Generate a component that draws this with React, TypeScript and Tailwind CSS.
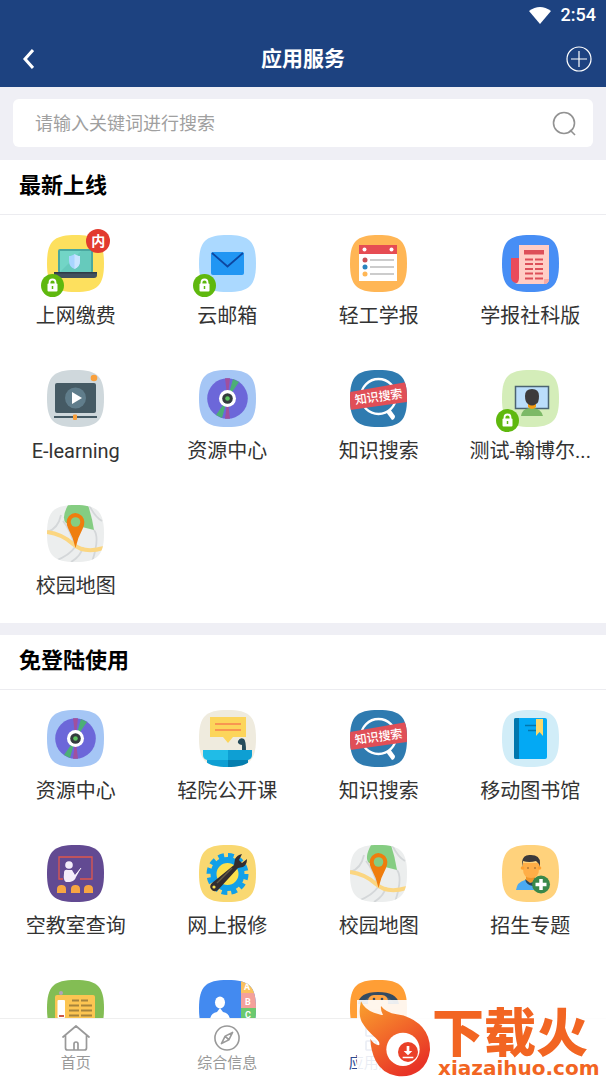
import React, { useId } from 'react';

interface AppItem {
  name: string;
  icon: React.FC;
  locked?: boolean;
  intranet?: boolean;
}

const SQUIRCLE = 'M28.5 0C50.5 0 57 6.5 57 28.5S50.5 57 28.5 57 0 50.5 0 28.5 6.5 0 28.5 0Z';

const Tile: React.FC<{ color: string; children: React.ReactNode }> = ({ color, children }) => {
  const id = useId();
  return (
    <svg viewBox="0 0 57 57" className="block h-[57px] w-[57px]" aria-hidden="true">
      <clipPath id={id}>
        <path d={SQUIRCLE} />
      </clipPath>
      <g clipPath={`url(#${id})`}>
        <rect width="57" height="57" fill={color} />
        {children}
      </g>
    </svg>
  );
};

const LaptopIcon = () => (
  <Tile color="#fde05e">
    <rect x="11" y="14" width="35" height="24" rx="2" fill="#4aa8a0" />
    <rect x="13" y="16" width="31" height="21" fill="#72d5c6" />
    <path d="M13 37 34 16h10v21z" fill="#66cabc" />
    <path d="M27.500 19c2 1.500 3.500 2 5.500 2v5c0 4-2 6.500-5.500 8-3.500-1.500-5.500-4-5.500-8v-5c2 0 3.500-.5 5.500-2z" fill="#a9d5ff" />
    <path d="M27.500 19c2 1.500 3.500 2 5.500 2v5c0 4-2 6.500-5.500 8z" fill="#c9e5ff" />
    <path d="M7 37h43v3q0 3-3 3H10q-3 0-3-3z" fill="#41505e" />
    <path d="M7 37h43v1.500H7z" fill="#2f3b47" />
  </Tile>
);

const MailIcon = () => (
  <Tile color="#abd9ff">
    <rect x="12" y="17" width="33" height="23" rx="2" fill="#2196f3" />
    <path d="m13 18 15.500 13.500L44 18" fill="none" stroke="#0d47a1" strokeWidth="1.800" />
  </Tile>
);

const ScheduleIcon = () => (
  <Tile color="#ffb655">
    <rect x="9" y="10" width="38" height="36" fill="#fff" />
    <rect x="9" y="10" width="38" height="9" fill="#e64c53" />
    <circle cx="14.500" cy="14.500" r="2" fill="#fff" />
    <circle cx="41.500" cy="14.500" r="2" fill="#fff" />
    <circle cx="15" cy="25" r="2.500" fill="#c94f55" />
    <circle cx="15" cy="32" r="2.500" fill="#2a83bd" />
    <circle cx="15" cy="39" r="2.500" fill="#ffb655" />
    <path d="M20 25h24M20 32h24M20 39h24" stroke="#ccc" strokeWidth="2" />
  </Tile>
);

const NewspaperIcon = () => (
  <Tile color="#478ef5">
    <path d="M9 23h9v25h-4q-5-1-5-6z" fill="#e94b5b" />
    <path d="M17 10h30v34q0 5-5 5H13q4-1 4-6z" fill="#ffcdc5" />
    <path d="M42 49q5 0 5-5h-5z" fill="#f7aaa4" />
    <rect x="22" y="15" width="20" height="4.500" fill="#dd4f59" />
    <path d="M23 24.500h8M33 24.500h8M23 29h8M33 29h8M23 34h8M33 34h8M23 38.500h8M33 38.500h8M23 43.500h8M33 43.500h8" stroke="#dd4f59" strokeWidth="2" />
  </Tile>
);

const VideoIcon = () => (
  <Tile color="#cfd8dc">
    <circle cx="47" cy="8" r="3.300" fill="#f9a03c" />
    <rect x="8" y="13" width="41" height="30" rx="2" fill="#455a64" />
    <circle cx="28.500" cy="28" r="10.500" fill="#607d8b" />
    <path d="m25 22 10 6-10 6z" fill="#fff" />
    <rect x="7" y="46" width="43" height="2" fill="#455a64" />
    <rect x="26" y="44.500" width="4" height="5.500" rx="1" fill="#f9a03c" />
  </Tile>
);

const DiscIcon = () => (
  <Tile color="#a5c6f5">
    <circle cx="28.500" cy="28.500" r="20.300" fill="#6c67d9" />
    <path d="M26 8.300h5l-2.500 20zM26 48.700h5l-2.500-20.200z" fill="#a0509e" />
    <path d="m34 9 6 3-11.500 16.500zM23 48l-6-3 11.500-16.500z" fill="#4caf76" />
    <circle cx="28.500" cy="28.500" r="8.500" fill="#fff" />
    <circle cx="28.500" cy="28.500" r="5.300" fill="#333b3d" />
    <circle cx="28.500" cy="28.500" r="2.300" fill="#5bc15f" />
  </Tile>
);

const KnowledgeIcon = () => (
  <Tile color="#2f7bb0">
    <circle cx="28.500" cy="26.500" r="17.500" fill="none" stroke="#fff" strokeWidth="2.300" />
    <path d="m36 42 4-3 5 7q0 3-3 4z" fill="#fff" />
    <path d="M0 22 57 12v20L0 40z" fill="#e04f57" />
    <text
      x="28.500"
      y="31"
      fill="#fff"
      textAnchor="middle"
      transform="rotate(-8 28.500 26)"
      className="font-['Noto_Sans_CJK_SC',sans-serif] text-[12px] font-medium"
    >
      知识搜索
    </text>
  </Tile>
);

const MonitorIcon = () => (
  <Tile color="#d4edb9">
    <rect x="13.500" y="16.500" width="33" height="22" fill="#bbdefb" stroke="#4b6472" strokeWidth="1.500" />
    <path d="M19 46q1-7 8-8h5q7 1 9 8z" fill="#7cb966" />
    <path d="M26 34h8v3q-4 4-8 0z" fill="#f39c12" />
    <path d="M23 26q0-7 7-7t7 7-3 8q-4 3-8 0-3-2-3-8z" fill="#3d3b3c" />
  </Tile>
);

const MapIcon = () => (
  <Tile color="#eceeee">
    <path d="M21 0h20q4 12 6 25L19 18q-5-5 2-18z" fill="#85cd82" />
    <path d="M14 10q-3 14-14 17M16 16q7 8 12 26-5 8-20 14M42 0q6 12 13 16M47 25q6 8-2 32M36 42q-2 9-12 15" fill="none" stroke="#d4d7d9" strokeWidth="1.800" />
    <path d="M0 27q15 2 26 12t31 4" fill="none" stroke="#fbd681" strokeWidth="4" />
    <path d="M28.500 43Q26 32 21 23q-3-7 1-12 6-6 13 0 4 5 1 12-5 9-7.500 20z" fill="#ef7d0e" />
    <circle cx="28.500" cy="17" r="4.800" fill="#85cd82" />
  </Tile>
);

const LectureIcon = () => (
  <Tile color="#efebde">
    <path d="M11 7h36v20H34l-5 6-5-6H11z" fill="#fcd55b" />
    <path d="M16 14h26M16 20h26" stroke="#f6814f" strokeWidth="1.500" />
    <path d="M43 41v-6q-5-1-4-4 2-4 6-2 2 2 2 12z" fill="#264c5b" />
    <path d="M8 48h21v9H8z" fill="#0e9fd3" />
    <path d="M29 48h20v9H29z" fill="#057eaf" />
    <path d="M4 40h25v10H8q-4-1-4-5z" fill="#20bce7" />
    <path d="M29 40h24v5q0 4-4 5H29z" fill="#0e9fd3" />
  </Tile>
);

const BookIcon = () => (
  <Tile color="#d1edf8">
    <rect x="12" y="8" width="33" height="41" rx="2" fill="#03a9f4" />
    <path d="M14 8h3v41h-3q-2 0-2-2V10q0-2 2-2z" fill="#0277ad" />
    <path d="M23 15.500h13M26 20.500h10" stroke="#0277ad" strokeWidth="1.500" />
    <path d="M34 9h7v17l-3.500-4-3.500 4z" fill="#fbd96b" />
  </Tile>
);

const ClassroomIcon = () => (
  <Tile color="#624a92">
    <path d="M16 34h-4V12h33v22H33" fill="none" stroke="#e0574c" strokeWidth="1.300" />
    <circle cx="22" cy="20" r="3.800" fill="#f4edfa" />
    <path d="M17 28q0-4 4-3h4l3 5 6-7-5 9q-1 4-6 5h-4q-3-1-2-9z" fill="#f4edfa" />
    <path d="m28 31 6-8" stroke="#f4edfa" />
    <path d="M10 48v-4q0-4 4.500-4t4.500 4v4zM24 48v-4q0-4 4.500-4t4.500 4v4zM37 48v-4q0-4 4.500-4t4.500 4v4z" fill="#f7a542" />
  </Tile>
);

const RepairIcon = () => (
  <Tile color="#f9d871">
    <circle cx="28.500" cy="29" r="18.500" fill="none" stroke="#11a0e8" strokeWidth="5" strokeDasharray="5.700 3.980" />
    <circle cx="28.500" cy="29" r="14" fill="#fbe04d" stroke="#11a0e8" strokeWidth="6" />
    <path d="m35 20 1-6q2-4 7-5l-3 6 3 3 5-4q0 6-4 8l-5 1-20 22q-4 3-7-1-2-3 1-6z" fill="#332d30" />
    <path d="m18 38 15-15" stroke="#655b45" strokeWidth="1.500" />
    <circle cx="15" cy="42" r="1.600" fill="#fbe04d" />
  </Tile>
);

const AdmissionIcon = () => (
  <Tile color="#ffd27c">
    <path d="M14 45q1-8 9-10h10q8 2 8 10z" fill="#4baaf1" />
    <path d="M24 30h9v6q-4 4-9 0z" fill="#ef962c" />
    <path d="M21 18h16v6q0 9-8 9t-8-9z" fill="#ffae47" />
    <circle cx="20.500" cy="23" r="1.800" fill="#ffa233" />
    <circle cx="37.500" cy="23" r="1.800" fill="#ffa233" />
    <path d="M20 22v-5q1-8 9-7 9 0 9 8v4q-1-4-4-6-7 2-13 0z" fill="#3b393a" />
    <path d="M25.500 23h1M32.500 23h1" stroke="#684624" strokeWidth="1.500" />
    <path d="m23 34 5 4 4-1-1 4q-7-1-8-7z" fill="#27475c" />
    <circle cx="39" cy="39.500" r="9" fill="#39884a" />
    <path d="M39 34v11M33.500 39.500h11" stroke="#fff" strokeWidth="3.500" />
  </Tile>
);

const NoticeIcon = () => (
  <Tile color="#83bd54">
    <circle cx="14" cy="13" r="2" fill="#b3a3ba" />
    <rect x="8" y="15" width="40" height="42" rx="2" fill="#fcc552" />
    <rect x="10.500" y="20" width="7.500" height="18" rx="1" fill="#fff" />
    <path d="M12 36h5" stroke="#cc5746" strokeWidth="2" />
    <path d="M25 20.500h7M34 20.500h7M22 25.500h10M34 25.500h11M22 30.500h10M34 30.500h11M22 35.500h10M34 35.500h11" stroke="#a6843c" strokeWidth="1.800" />
  </Tile>
);

const ContactsIcon = () => (
  <Tile color="#438af0">
    <rect x="42" width="15" height="13" fill="#fac15e" />
    <rect x="42" y="13" width="15" height="15" fill="#f4a19b" />
    <rect x="42" y="28" width="15" height="29" fill="#6cc96e" />
    <g fill="#fff" className="font-['Roboto',sans-serif] text-[9px] font-bold">
      <text x="45" y="10">A</text>
      <text x="46" y="25">B</text>
      <text x="46" y="38">C</text>
    </g>
    <ellipse cx="21" cy="22.500" rx="5" ry="6" fill="#fff" />
    <path d="M11 41q0-8 7-9l3-4 3 4q7 1 7 9z" fill="#fff" />
  </Tile>
);

const BusIcon = () => (
  <Tile color="#ff9e35">
    <path d="M8 24q1-12 20-12t21 12z" fill="#344b61" />
    <path d="M13 23q3-7 15-7t16 7z" fill="#4b6379" />
    <rect x="18" y="15" width="20" height="14" rx="6" fill="#ffa441" />
    <circle cx="24" cy="19" r="1.300" fill="#344b61" />
    <circle cx="32" cy="19" r="1.300" fill="#344b61" />
  </Tile>
);

const LockBadge = () => (
  <svg viewBox="0 0 23 23" className="absolute -left-1.5 top-[39px] h-[23px] w-[23px]" aria-hidden="true">
    <circle cx="11.500" cy="11.500" r="11.500" fill="#5fb80e" />
    <path d="M8.500 10V8.500a3 3 0 0 1 6 0V10" fill="none" stroke="#fff" strokeWidth="1.800" />
    <rect x="6.500" y="9.500" width="10" height="8" rx="1" fill="#fff" />
    <path d="M11.500 12v3" stroke="#5fb80e" strokeWidth="1.500" />
  </svg>
);

const latestApps: AppItem[] = [
  { name: '上网缴费', icon: LaptopIcon, locked: true, intranet: true },
  { name: '云邮箱', icon: MailIcon, locked: true },
  { name: '轻工学报', icon: ScheduleIcon },
  { name: '学报社科版', icon: NewspaperIcon },
  { name: 'E-learning', icon: VideoIcon },
  { name: '资源中心', icon: DiscIcon },
  { name: '知识搜索', icon: KnowledgeIcon },
  { name: '测试-翰博尔...', icon: MonitorIcon, locked: true },
  { name: '校园地图', icon: MapIcon },
];

const publicApps: AppItem[] = [
  { name: '资源中心', icon: DiscIcon },
  { name: '轻院公开课', icon: LectureIcon },
  { name: '知识搜索', icon: KnowledgeIcon },
  { name: '移动图书馆', icon: BookIcon },
  { name: '空教室查询', icon: ClassroomIcon },
  { name: '网上报修', icon: RepairIcon },
  { name: '校园地图', icon: MapIcon },
  { name: '招生专题', icon: AdmissionIcon },
  { name: '', icon: NoticeIcon },
  { name: '', icon: ContactsIcon },
  { name: '', icon: BusIcon },
];

const AppSection: React.FC<{ title: string; apps: AppItem[] }> = ({ title, apps }) => (
  <section className="bg-white">
    <h2 className="border-b border-[#ececf0] px-[19px] pt-2.5 pb-3 text-[22px] leading-8 font-bold text-black">
      {title}
    </h2>
    <div className="grid grid-cols-4 gap-y-[38px] pt-5 pb-[21px]">
      {apps.map(({ name, icon: Icon, locked, intranet }, index) => (
        <a key={index} href="#" className="flex flex-col items-center gap-2">
          <span className="relative">
            <Icon />
            {locked && <LockBadge />}
            {intranet && (
              <span className="absolute -top-1.5 -right-1.5 flex h-6 w-6 items-center justify-center rounded-full bg-[#e23a2e] text-sm font-bold text-white">
                内
              </span>
            )}
          </span>
          <span className="text-xl leading-8 whitespace-nowrap text-[#333]">{name}</span>
        </a>
      ))}
    </div>
  </section>
);

const Header = () => (
  <header className="bg-[#1d4280] text-white">
    <div className="flex h-[30px] items-center justify-end gap-2.5 pr-2.5">
      <svg viewBox="0 0 22 17" className="h-[17px] w-[22px]" fill="currentColor" aria-hidden="true">
        <path d="M0 4Q11-4 22 4L11 17z" />
      </svg>
      <span className="font-['Roboto',sans-serif] text-lg leading-8 font-medium">2:54</span>
    </div>
    <div className="flex h-[57px] items-center justify-between px-3.5">
      <button aria-label="返回" className="flex h-8 w-8 items-center pl-2">
        <svg viewBox="0 0 12 20" className="h-5 w-3" fill="none" stroke="currentColor" strokeWidth="3" aria-hidden="true">
          <path d="m11 1-8 9 8 9" />
        </svg>
      </button>
      <h1 className="text-[21px] leading-8 font-bold">应用服务</h1>
      <button aria-label="添加" className="flex h-8 w-8 items-center justify-end">
        <svg viewBox="0 0 26 26" className="h-[26px] w-[26px]" fill="none" stroke="currentColor" strokeWidth="1.200" aria-hidden="true">
          <circle cx="13" cy="13" r="12" />
          <path d="M13 5v16M5 13h16" />
        </svg>
      </button>
    </div>
  </header>
);

const SearchBar = () => (
  <form className="bg-[#efeff5] px-[13px] pt-3 pb-[13px]">
    <div className="flex h-12 items-center rounded-md bg-white pr-4 pl-[22px]">
      <input
        type="text"
        aria-label="搜索应用"
        placeholder="请输入关键词进行搜索"
        className="h-full min-w-0 flex-1 text-lg outline-none placeholder:text-[#a0a0a0]"
      />
      <button type="button" aria-label="搜索">
        <svg viewBox="0 0 25 26" className="h-[26px] w-[25px]" fill="none" stroke="#929292" strokeWidth="1.600" aria-hidden="true">
          <circle cx="12" cy="13" r="10.500" />
          <path d="m18 20 5 5" />
        </svg>
      </button>
    </div>
  </form>
);

const TabBar = () => (
  <nav className="grid h-[62px] shrink-0 grid-cols-4 border-t border-[#efefef] bg-white text-[15px] leading-5 text-[#999]">
    <a href="#" className="flex flex-col items-center gap-0.5 pt-1.5">
      <svg viewBox="0 0 28 26" className="h-[26px] w-7" fill="none" stroke="currentColor" strokeWidth="1.700" strokeLinejoin="round" strokeLinecap="round" aria-hidden="true">
        <path d="M1 12 14 1l13 11M3.500 10v13q0 2 2 2h17q2 0 2-2V10M12 25v-6q0-2 2-2t2 2v6" />
      </svg>
      首页
    </a>
    <a href="#" className="flex flex-col items-center gap-0.5 pt-1.5">
      <svg viewBox="0 0 28 28" className="h-[26px] w-7" fill="none" stroke="currentColor" strokeWidth="1.700" strokeLinejoin="round" aria-hidden="true">
        <circle cx="14" cy="14" r="13" />
        <path d="m20 8-4 8-8 4 4-8zM12 12l4 4" />
      </svg>
      综合信息
    </a>
    <a href="#" className="flex flex-col items-center gap-0.5 pt-1.5 text-[#2c4a92]">
      <svg viewBox="0 0 28 26" className="h-[26px] w-7" fill="none" stroke="currentColor" strokeWidth="1.700" aria-hidden="true">
        <rect x="1" y="1" width="10" height="10" rx="1" />
        <rect x="17" y="1" width="10" height="10" rx="1" />
        <rect x="1" y="16" width="10" height="9" rx="1" />
        <rect x="17" y="16" width="10" height="9" rx="1" />
      </svg>
      应用服务
    </a>
  </nav>
);

// Download site banner pinned to the bottom right corner
const SiteBanner = () => (
  <div className="absolute right-0 bottom-0 flex h-20 w-[249px] bg-white/90 text-[#f26522]">
    <svg viewBox="110 90 225 240" className="h-20 w-[75px] shrink-0" aria-hidden="true">
      <defs>
        <linearGradient id="flame" x1="0" y1="0" x2=".6" y2="1">
          <stop offset="0" stopColor="#f9a12e" />
          <stop offset=".5" stopColor="#f26a2a" />
          <stop offset="1" stopColor="#e83426" />
        </linearGradient>
      </defs>
      <path
        d="M122 94Q133 119 161 128 188 137 188 135 180 122 182 108 197 128 229 133 277 139 306 172 330 200 329 240 325 280 297 302 266 324 227 317 185 309 166 272 151 242 150 206 158 221 176 226 181 218 166 204 137 178 124 155 113 132 122 94Z"
        fill="url(#flame)"
      />
      <circle cx="248" cy="238" r="50" fill="#fff" />
      <circle cx="263" cy="246" r="30" fill="#ea4128" />
      <path d="M259 228h8v15h9l-13 13-13-13h9zM247 260h32v5h-32z" fill="#fff" />
    </svg>
    <div className="flex flex-col pt-3">
      <span className="text-[52px] leading-[46px] font-black whitespace-nowrap">下载火</span>
      <span className="pt-0.5 pl-1.5 font-['DejaVu_Sans',sans-serif] text-xl leading-4 font-bold">xiazaihuo.com</span>
    </div>
  </div>
);

export default function App() {
  return (
    <div className="relative flex h-screen flex-col overflow-hidden bg-[#efeff5] font-['Roboto','Noto_Sans_CJK_SC',sans-serif]">
      <Header />
      <SearchBar />
      <main className="flex min-h-0 flex-1 flex-col gap-3 overflow-hidden">
        <AppSection title="最新上线" apps={latestApps} />
        <AppSection title="免登陆使用" apps={publicApps} />
      </main>
      <TabBar />
      <SiteBanner />
    </div>
  );
}
